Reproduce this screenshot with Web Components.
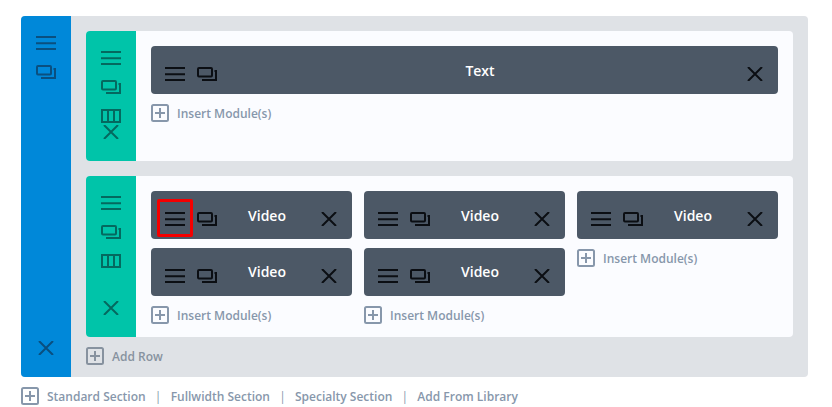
<!DOCTYPE html>
<html>
<head>
<meta charset="utf-8">
<title>Builder</title>
<style>
  body {
    margin: 0;
    background: #fff;
    font-family: "Open Sans", "Liberation Sans", sans-serif;
  }
</style>
</head>
<body>
<builder-page>
  <builder-section>
    <builder-row style="--row-height: 130px">
      <builder-column>
        <builder-module>Text</builder-module>
        <builder-add label="Insert Module(s)"></builder-add>
      </builder-column>
    </builder-row>
    <builder-row>
      <builder-column>
        <builder-module marked>Video</builder-module>
        <builder-module style="--title-top: -8px">Video</builder-module>
        <builder-add label="Insert Module(s)"></builder-add>
      </builder-column>
      <builder-column>
        <builder-module>Video</builder-module>
        <builder-module style="--title-top: -8px">Video</builder-module>
        <builder-add label="Insert Module(s)"></builder-add>
      </builder-column>
      <builder-column>
        <builder-module>Video</builder-module>
        <builder-add label="Insert Module(s)"></builder-add>
      </builder-column>
    </builder-row>
    <builder-add label="Add Row" style="--add-color: #87929f"></builder-add>
  </builder-section>
</builder-page>

<script>
// icon paths, all drawn in a 20x14 box
const ICONS = {
  menu: `<path d="M0 1H20M0 7.2H20M0 13H20" fill="none" stroke="currentColor" stroke-width="2"/>`,
  copy: `<rect x="1" y="1" width="14" height="8.6" rx="1" fill="none" stroke="currentColor" stroke-width="2"/>
         <path d="M17.5 4H19V13H5" fill="none" stroke="currentColor" stroke-width="2"/>`,
  columns: `<rect x="1" y="1" width="18" height="12" fill="none" stroke="currentColor" stroke-width="2"/>
            <path d="M7 1V13M13 1V13" fill="none" stroke="currentColor" stroke-width="2"/>`,
  close: `<path d="M3 0L17 14M17 0L3 14" fill="none" stroke="currentColor" stroke-width="2"/>`
};

class BuilderIcon extends HTMLElement {
  constructor() {
    super();
    const shadow = this.attachShadow({ mode: "open" });
    const name = this.getAttribute("name");
    shadow.innerHTML = `
      <style>
        :host { display: block; width: 20px; height: 14px; }
        svg { display: block; }
      </style>
      <svg width="20" height="14" viewBox="0 0 20 14">${ICONS[name]}</svg>`;
  }
}
customElements.define("builder-icon", BuilderIcon);

class BuilderSidebar extends HTMLElement {
  constructor() {
    super();
    const shadow = this.attachShadow({ mode: "open" });
    shadow.innerHTML = `
      <style>
        :host {
          display: flex;
          flex-direction: column;
          justify-content: space-between;
          align-items: center;
          flex: none;
          width: 50px;
          padding: 20px 0 22px;
          box-sizing: border-box;
        }
        .top { display: flex; flex-direction: column; gap: 15px; }
      </style>
      <div class="top">
        <builder-icon name="menu"></builder-icon>
        <builder-icon name="copy"></builder-icon>
        <slot></slot>
      </div>
      <builder-icon name="close"></builder-icon>`;
  }
}
customElements.define("builder-sidebar", BuilderSidebar);

class BuilderPage extends HTMLElement {
  constructor() {
    super();
    const shadow = this.attachShadow({ mode: "open" });
    shadow.innerHTML = `
      <style>
        :host { display: block; padding: 16px 24px 0 21px; }
        footer {
          display: flex;
          align-items: center;
          margin-top: 10px;
          height: 18px;
          font-size: 12px;
          font-weight: 600;
          color: #8797ab;
        }
        i { font-style: normal; font-weight: 400; width: 25px; text-align: center; }
        .first { margin-left: 8px; }
        builder-plus { flex: none; }
      </style>
      <slot></slot>
      <footer>
        <builder-plus></builder-plus>
        <span class="first">Standard Section</span>
        <i>|</i><span>Fullwidth Section</span>
        <i>|</i><span>Specialty Section</span>
        <i>|</i><span>Add From Library</span>
      </footer>`;
  }
}
customElements.define("builder-page", BuilderPage);

class BuilderSection extends HTMLElement {
  constructor() {
    super();
    const shadow = this.attachShadow({ mode: "open" });
    shadow.innerHTML = `
      <style>
        :host {
          display: flex;
          background: #dfe2e6;
          border-radius: 4px;
          overflow: hidden;
        }
        builder-sidebar { background: #0088d9; color: #0a4f7f; }
        .rows {
          flex: 1;
          display: flex;
          flex-direction: column;
          gap: 15px;
          padding: 15px 15px 12px;
        }
        ::slotted(builder-add) { margin-top: -5px; }
      </style>
      <builder-sidebar></builder-sidebar>
      <div class="rows"><slot></slot></div>`;
  }
}
customElements.define("builder-section", BuilderSection);

class BuilderRow extends HTMLElement {
  constructor() {
    super();
    const shadow = this.attachShadow({ mode: "open" });
    shadow.innerHTML = `
      <style>
        :host {
          display: flex;
          min-height: var(--row-height, 0);
          background: #fbfcff;
          border-radius: 4px;
          overflow: hidden;
        }
        builder-sidebar { background: #00c4a9; color: #04695f; }
        .cols {
          flex: 1;
          display: flex;
          gap: 12px;
          padding: 15px 15px 13px;
        }
      </style>
      <builder-sidebar><builder-icon name="columns"></builder-icon></builder-sidebar>
      <div class="cols"><slot></slot></div>`;
  }
}
customElements.define("builder-row", BuilderRow);

class BuilderColumn extends HTMLElement {
  constructor() {
    super();
    const shadow = this.attachShadow({ mode: "open" });
    shadow.innerHTML = `
      <style>
        :host {
          display: flex;
          flex-direction: column;
          gap: 9px;
          flex: 1 1 0;
          min-width: 0;
        }
        ::slotted(builder-add) { margin-top: 1px; }
      </style>
      <slot></slot>`;
  }
}
customElements.define("builder-column", BuilderColumn);

class BuilderModule extends HTMLElement {
  constructor() {
    super();
    const shadow = this.attachShadow({ mode: "open" });
    shadow.innerHTML = `
      <style>
        :host {
          display: flex;
          position: relative;
          height: 48px;
          box-sizing: border-box;
          padding: 21px 13px 13px 14px;
          gap: 12px;
          background: #4c5866;
          border-radius: 4px;
          color: #0b0e13;
        }
        .title {
          flex: 1;
          margin: var(--title-top, -7px) 2px 0 0;
          text-align: center;
          color: #fff;
          font-size: 14px;
          line-height: 22px;
          font-weight: 600;
        }
        .mark {
          position: absolute;
          left: 6px;
          top: 8px;
          width: 36px;
          height: 38px;
          box-sizing: border-box;
          border: 3px solid #f50000;
          border-radius: 2px;
        }
      </style>
      <builder-icon name="menu"></builder-icon>
      <builder-icon name="copy"></builder-icon>
      <div class="title"><slot></slot></div>
      <builder-icon name="close"></builder-icon>
      ${this.hasAttribute("marked") ? '<div class="mark"></div>' : ""}`;
  }
}
customElements.define("builder-module", BuilderModule);

class BuilderPlus extends HTMLElement {
  constructor() {
    super();
    const shadow = this.attachShadow({ mode: "open" });
    shadow.innerHTML = `
      <style>
        :host { display: block; width: 18px; height: 18px; color: var(--add-color, #8797ab); }
        svg { display: block; }
      </style>
      <svg width="18" height="18" viewBox="0 0 18 18">
        <rect x="1" y="1" width="16" height="16" rx="1.5" fill="none" stroke="currentColor" stroke-width="2"/>
        <path d="M9 4V14M4 9H14" fill="none" stroke="currentColor" stroke-width="2"/>
      </svg>`;
  }
}
customElements.define("builder-plus", BuilderPlus);

class BuilderAdd extends HTMLElement {
  constructor() {
    super();
    const shadow = this.attachShadow({ mode: "open" });
    shadow.innerHTML = `
      <style>
        :host {
          display: flex;
          align-items: center;
          gap: 8px;
          height: 18px;
          font-size: 12px;
          font-weight: 600;
          color: var(--add-color, #8797ab);
        }
      </style>
      <builder-plus></builder-plus>
      <span>${this.getAttribute("label")}</span>`;
  }
}
customElements.define("builder-add", BuilderAdd);
</script>
</body>
</html>
